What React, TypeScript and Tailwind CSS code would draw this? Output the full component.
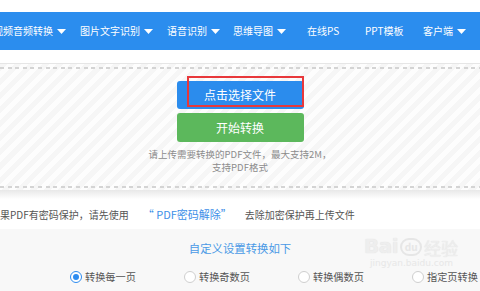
import React from "react";

const FONT = { fontFamily: '"Noto Sans CJK SC", "Noto Sans", sans-serif' };

type NavItem = { label: string; caret: boolean; width: string };

const navItems: NavItem[] = [
  { label: "视频音频转换", caret: true, width: "w-[87px]" },
  { label: "图片文字识别", caret: true, width: "w-[87px]" },
  { label: "语音识别", caret: true, width: "w-[66px]" },
  { label: "思维导图", caret: true, width: "w-[74px]" },
  { label: "在线PS", caret: false, width: "w-[58px]" },
  { label: "PPT模板", caret: false, width: "w-[58px]" },
  { label: "客户端", caret: true, width: "w-[60px]" },
];

const radios = ["转换每一页", "转换奇数页", "转换偶数页", "指定页转换"];

function Caret() {
  return (
    <svg width="9" height="5" viewBox="0 0 9 5" className="ml-[4px] shrink-0">
      <path d="M0 0 H9 L4.5 5 Z" fill="#ffffff" />
    </svg>
  );
}

function Dashes() {
  return (
    <div className="h-[2px] w-full bg-[repeating-linear-gradient(to_right,#d4d4d4_0px,#d4d4d4_4px,transparent_4px,transparent_7.6px)]" />
  );
}

function Radio({ label, checked }: { label: string; checked?: boolean }) {
  return (
    <div className="flex w-[114px] shrink-0 items-center">
      <span
        className={
          checked
            ? "flex h-[12px] w-[12px] items-center justify-center rounded-full border border-[#2d8cf0] bg-white"
            : "h-[12px] w-[12px] rounded-full border border-[#cfcfcf] bg-white"
        }
      >
        {checked ? <span className="h-[6px] w-[6px] rounded-full bg-[#2d8cf0]" /> : null}
      </span>
      <span className="ml-[3px] text-[10.2px] leading-none text-[#555]">{label}</span>
    </div>
  );
}

export default function App() {
  return (
    <div className="relative h-[291px] w-[480px] overflow-hidden bg-white" style={FONT}>
      <div className="h-[12px]" />

      {/* top nav */}
      <div className="flex h-[38px] items-center bg-[#2b8dee] pl-0 text-[10px] text-white">
        <div className="ml-[-7px] flex shrink-0">
          {navItems.map((item) => (
            <div key={item.label} className={`flex shrink-0 items-center ${item.width}`}>
              <span className="whitespace-nowrap leading-none">{item.label}</span>
              {item.caret ? <Caret /> : null}
            </div>
          ))}
        </div>
      </div>

      <div className="h-[13px]" />
      <div className="h-px bg-[#e6e6e6]" />

      {/* upload zone */}
      <div className="flex h-[126px] flex-col bg-[repeating-linear-gradient(135deg,#f6f6f6_0px,#f6f6f6_5px,#fdfdfd_5px,#fdfdfd_10px)]">
        <div className="mt-[3px]">
          <Dashes />
        </div>
        <div className="flex flex-col items-center pt-[12px]">
          <div className="relative">
            <button className="flex h-[28px] w-[127px] items-center justify-center rounded-[3px] bg-[#2b8ced] text-[12px] text-white">
              点击选择文件
            </button>
            <span className="absolute left-[10px] top-[-5px] h-[31px] w-[117px] border-2 border-[#e8383b]" />
          </div>
          <button className="mt-[4px] flex h-[29px] w-[127px] items-center justify-center rounded-[3px] bg-[#5cb85c] text-[12px] text-white">
            开始转换
          </button>
          <p className="mt-[6px] text-center text-[9.5px] leading-[13px] text-[#8c8c8c]">
            请上传需要转换的PDF文件，最大支持2M，
            <br />
            支持PDF格式
          </p>
        </div>
        <div className="mt-auto mb-[2px]">
          <Dashes />
        </div>
      </div>
      <div className="h-[9px] bg-gradient-to-b from-[#e8e8e8] to-white" />

      {/* password notice */}
      <div className="flex h-[30px] items-center whitespace-nowrap text-[10px] text-[#555]">
        <span className="ml-[-10px]">如果PDF有密码保护，请先使用</span>
        <span className="ml-[14px] text-[11px] text-[#3d8fe8]">“ PDF密码解除”</span>
        <span className="ml-[13px]">去除加密保护再上传文件</span>
      </div>

      {/* options */}
      <div className="h-[62px] bg-[#f8f8f8]">
        <p className="pt-[12px] text-center text-[11.4px] leading-[14px] text-[#4a9ae6]">自定义设置转换如下</p>
        <div className="mt-[16px] flex pl-[70px]">
          {radios.map((r, i) => (
            <Radio key={r} label={r} checked={i === 0} />
          ))}
        </div>
      </div>

      {/* watermark */}
      <div className="pointer-events-none absolute left-[364px] top-[236px] flex flex-col items-start opacity-80">
        <div className="flex items-end">
          <span className="text-[20px] font-bold leading-none tracking-tight text-[#ececec] [text-shadow:0_0_1px_#d8d8d8]" style={{ fontFamily: '"DejaVu Sans", sans-serif' }}>
            Bai
          </span>
          <span className="mx-[2px] flex h-[18px] w-[22px] items-center justify-center rounded-full border-2 border-[#e2e2e2] text-[10px] font-bold leading-none text-[#e2e2e2]">
            du
          </span>
          <span className="text-[17px] leading-none text-[#ececec] [text-shadow:0_0_1px_#d8d8d8]">经验</span>
        </div>
        <span className="mt-[3px] pl-[6px] text-[9px] leading-none text-[#e4e4e4]" style={{ fontFamily: '"DejaVu Sans", sans-serif' }}>
          jingyan.baidu.com
        </span>
      </div>
    </div>
  );
}
